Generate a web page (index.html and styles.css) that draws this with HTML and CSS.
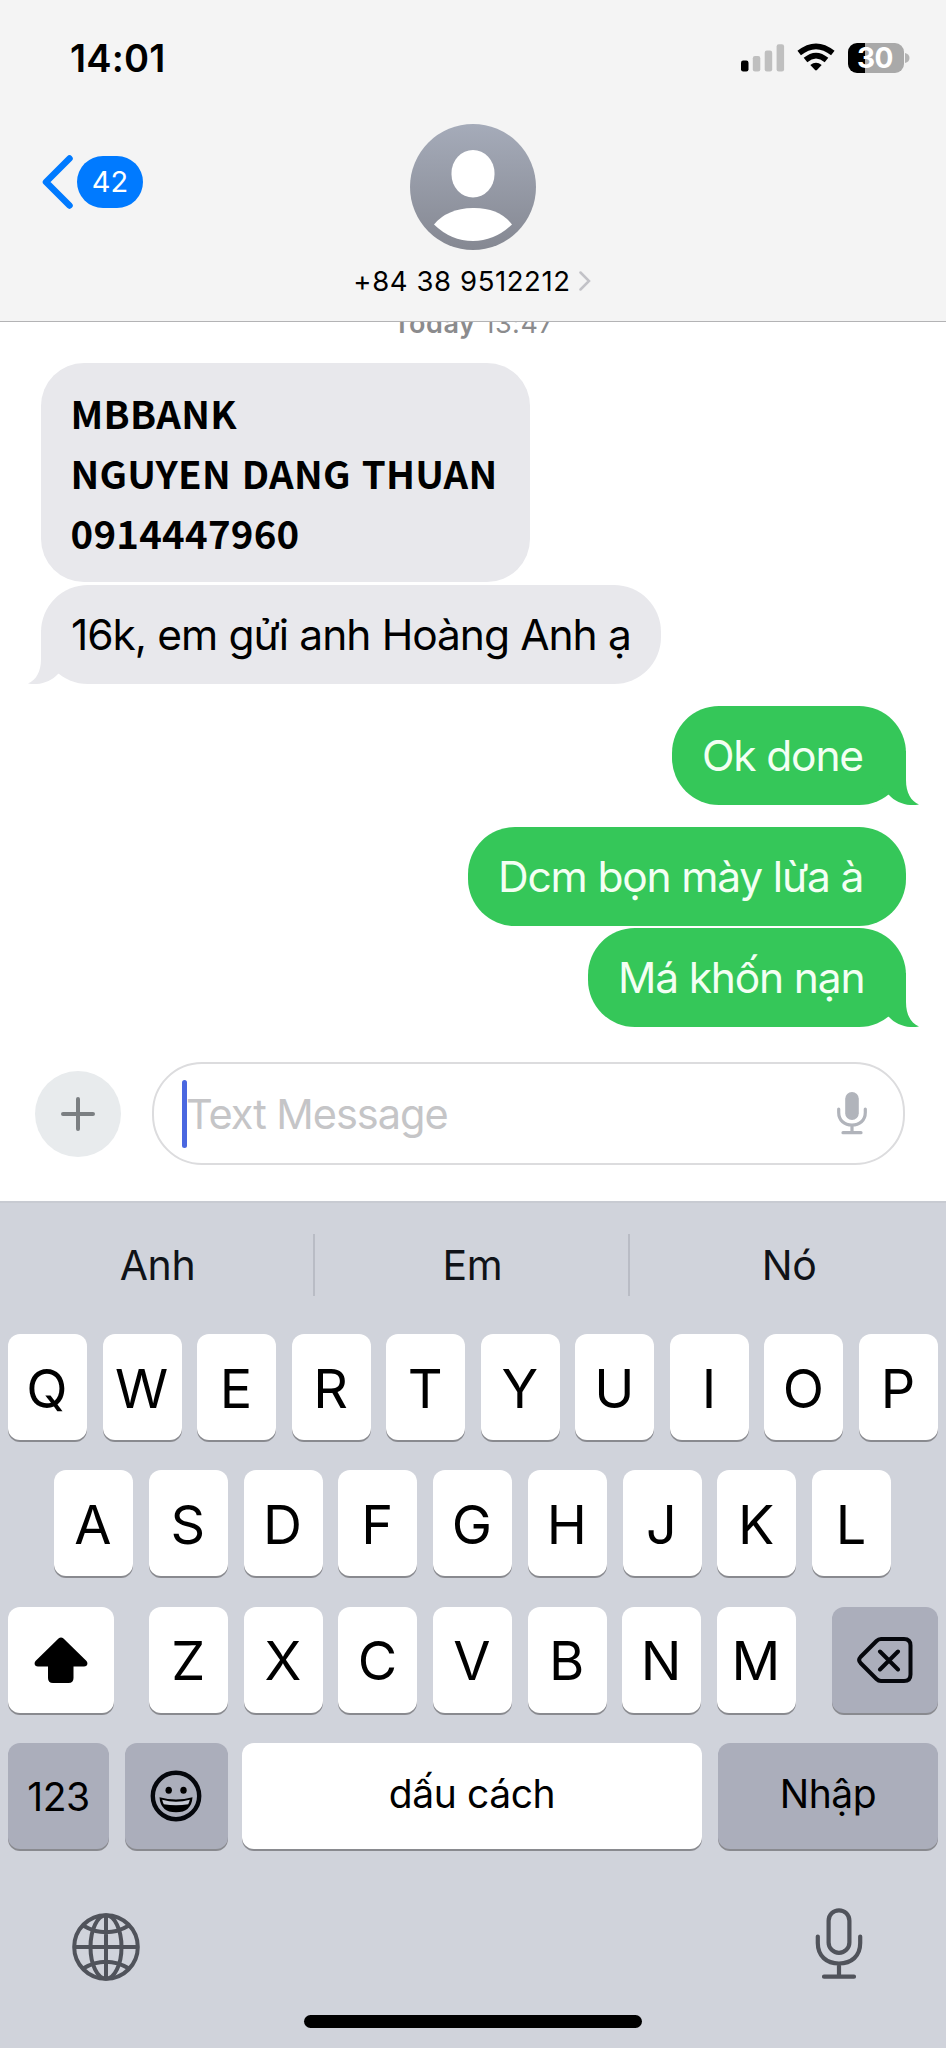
FILE: index.html
```
<!DOCTYPE html>
<html lang="vi">
<head>
<meta charset="utf-8">
<title>Messages</title>
<link rel="stylesheet" href="styles.css">
</head>
<body>
<svg class="defs" width="0" height="0">
  <symbol id="tail" viewBox="0 0 40 54"><path d="M27 0V29C27 42 32 50 40 53.6C29 55.500 17 52 10 44L0 34V0Z"/></symbol>
</svg>
<div class="phone">
  <header class="header">
    <div class="status">
      <span class="time">14:01</span>
      <div class="indicators">
        <svg class="signal" width="44" height="28" viewBox="0 0 44 28">
          <rect x="0" y="16.500" width="7.500" height="11" rx="2.200" fill="#000"/>
          <rect x="11.800" y="12" width="7.500" height="15.500" rx="2.200" fill="#bfbfbf"/>
          <rect x="23.700" y="6.500" width="7.500" height="21" rx="2.200" fill="#bfbfbf"/>
          <rect x="35.600" y="0.300" width="7.500" height="27.200" rx="2.200" fill="#bfbfbf"/>
        </svg>
        <svg class="wifi" width="38" height="29" viewBox="0 0 38 29">
          <path d="M2.200 10Q19 -3.400 35.800 10M8.500 17Q19 8.200 29.500 17" fill="none" stroke="#000" stroke-width="5.600"/>
          <path d="M13.300 22Q19 17.700 24.700 22L20.200 26.800Q19 28.200 17.800 26.800Z"/>
        </svg>
        <div class="battery"><span class="level">30</span></div>
        <svg class="nub" width="5" height="12" viewBox="0 0 5 12"><path d="M0 1Q4.500 2 4.500 6T0 11Z" fill="#b4b4b4"/></svg>
      </div>
    </div>
    <div class="nav">
      <div class="back">
        <svg width="31" height="54" viewBox="0 0 31 54"><path d="M27.500 3.500L4 27L27.500 50.500" fill="none" stroke="#007aff" stroke-width="6.500" stroke-linecap="round" stroke-linejoin="round"/></svg>
        <span class="unread">42</span>
      </div>
      <div class="contact">
        <svg class="avatar" width="126" height="126" viewBox="0 0 126 126">
          <defs><linearGradient id="g" x1="0" y1="0" x2="0" y2="1"><stop offset="0" stop-color="#a5abb9"/><stop offset="1" stop-color="#858892"/></linearGradient></defs>
          <circle cx="63" cy="63" r="63" fill="url(#g)"/>
          <rect x="41.500" y="26" width="43" height="47.500" rx="21.500" ry="23" fill="#fff"/>
          <path d="M24 100.500Q37 84.500 63 84T102 100.500Q85 117 63 117T24 100.500Z" fill="#fff"/>
        </svg>
        <div class="name"><span class="number">+84 38 9512212</span><svg width="12" height="20" viewBox="0 0 12 20"><path d="M1.500 1.500L10 10L1.500 18.500" fill="none" stroke="#c2c2c7" stroke-width="2.500" stroke-linecap="round"/></svg></div>
      </div>
    </div>
  </header>

  <main class="thread">
    <div class="stamp"><b>Today</b> 13:47</div>
    <div class="bubble in bank">MBBANK<br>NGUYEN DANG THUAN<br>0914447960</div>
    <div class="bubble in ask"><span>16k, em gửi anh Hoàng Anh ạ</span><svg class="tail left"><use href="#tail"/></svg></div>
    <div class="bubble out ok"><span>Ok done</span><svg class="tail"><use href="#tail"/></svg></div>
    <div class="bubble out lua"><span>Dcm bọn mày lừa à</span></div>
    <div class="bubble out ma"><span>Má khốn nạn</span><svg class="tail"><use href="#tail"/></svg></div>
  </main>

  <div class="composer">
    <div class="plus"><svg width="34" height="34" viewBox="0 0 34 34"><path d="M17 2V32M2 17H32" stroke="#7b7f82" stroke-width="4" stroke-linecap="round"/></svg></div>
    <div class="field">
      <i class="caret"></i><span class="placeholder">Text Message</span>
      <svg class="dictate" width="30" height="43" viewBox="0 0 30 43"><rect x="8.200" y="0" width="13.600" height="28" rx="6.800" fill="#b1b4bb"/><path d="M1.700 17V20.500C1.700 28.500 7.500 33 15 33S28.300 28.500 28.300 20.500V17M15 33V40.500M6 40.700H24" fill="none" stroke="#b1b4bb" stroke-width="3.200" stroke-linecap="round"/></svg>
    </div>
  </div>

  <section class="keyboard">
    <div class="suggestions"><span>Anh</span><span>Em</span><span>Nó</span></div>
    <div class="keys">
      <div class="row"><b>Q</b><b>W</b><b>E</b><b>R</b><b>T</b><b>Y</b><b>U</b><b>I</b><b>O</b><b>P</b></div>
      <div class="row second"><b>A</b><b>S</b><b>D</b><b>F</b><b>G</b><b>H</b><b>J</b><b>K</b><b>L</b></div>
      <div class="row third">
        <b class="wide"><svg width="54" height="46" viewBox="0 0 54 46"><path d="M24.500 1.600Q27 -0.600 29.500 1.600L52.500 24C54.500 26.500 53 29.500 50 29.500H39.500V41Q39.500 46 34.500 46H19Q14 46 14 41V29.500H4C1 29.500 -0.500 26.500 1.500 24Z"/></svg></b>
        <div class="letters"><b>Z</b><b>X</b><b>C</b><b>V</b><b>B</b><b>N</b><b>M</b></div>
        <b class="wide dark"><svg width="56" height="46" viewBox="0 0 56 46"><path d="M24 2H47Q53.500 2 53.500 8.500V37.500Q53.500 44 47 44H24Q21.500 44 19.500 42L3.500 26Q0.800 23 3.500 20L19.500 4Q21.500 2 24 2ZM23 14.500L41 32.500M41 14.500L23 32.500" fill="none" stroke="#05070c" stroke-width="4" stroke-linecap="round" stroke-linejoin="round"/></svg></b>
      </div>
      <div class="row fourth">
        <b class="dark num">123</b>
        <b class="dark emoji"><svg class="smile" width="52" height="52" viewBox="0 0 52 52"><circle cx="26" cy="26" r="23.200" fill="none" stroke="#05070c" stroke-width="4.400"/><ellipse cx="18.700" cy="20.300" rx="3.200" ry="3.500"/><ellipse cx="33.500" cy="20.300" rx="3.200" ry="3.500"/><path d="M9.500 27.200Q26 31.800 42.500 27.200Q41.500 42.300 26 42.300T9.500 27.200Z"/><path d="M12.200 29.800Q26 33.500 39.800 29.800Q39.300 32.300 38.200 34.200Q26 36.500 13.800 34.200Q12.700 32.300 12.200 29.800Z" fill="#c6c9d3"/></svg></b>
        <b class="space">dấu cách</b>
        <b class="dark enter">Nhập</b>
      </div>
    </div>
    <div class="dock">
      <svg class="globe" width="68" height="68" viewBox="0 0 68 68" fill="none" stroke="#50535b" stroke-width="4"><circle cx="34" cy="34" r="31.800"/><path d="M34 2V66M2 34H66M11 12.500Q34 26 57 12.500M11 55.500Q34 42 57 55.500"/><ellipse cx="34" cy="34" rx="15.500" ry="31.800"/></svg>
      <svg width="48" height="72" viewBox="0 0 48 72" fill="none" stroke="#50535b" stroke-width="4.200" stroke-linecap="round"><rect x="13.600" y="2.300" width="20.800" height="42.500" rx="10.400"/><path d="M2.800 28.500V35C2.800 48 11.500 55.500 24 55.500S45.200 48 45.200 35V28.500M24 55.500V68.500M9 68.700H39"/></svg>
    </div>
    <div class="home"></div>
  </section>
</div>
</body>
</html>
```
FILE: styles.css
```
* { box-sizing: border-box; }
body { margin: 0; background: #fff; font-family: Inter, "Noto Sans", sans-serif; color: #000; }
svg { display: block; flex: none; }
.defs { position: absolute; }
.phone { width: 946px; height: 2048px; display: flex; flex-direction: column; overflow: hidden; }

.header { height: 322px; flex: none; background: #f4f4f4; border-bottom: 1px solid #b3b3b5; }
.status { height: 124px; padding: 43px 36px 0 70px; display: flex; justify-content: space-between; align-items: flex-start; }
.time { font-size: 38px; line-height: 31px; font-weight: 600; letter-spacing: 0.2px; }
.indicators { display: flex; }
.signal { margin: 1px 12px 0 0; }
.wifi { margin-right: 13px; }
.battery { width: 56px; height: 30px; border-radius: 9px; background: linear-gradient(90deg, #000 17px, #a9a9a9 17px); display: flex; align-items: center; justify-content: center; padding-right: 2px; }
.level { font-size: 28px; line-height: 30px; font-weight: 700; color: #fff; letter-spacing: -0.5px; }
.nub { margin: 9px 0 0 1px; }
.nav { display: grid; grid-template-columns: 1fr 260px 1fr; }
.back { display: flex; align-items: center; gap: 4px; height: 54px; margin: 31px 0 0 42px; }
.unread { width: 66px; height: 52px; border-radius: 26px; background: #007aff; color: #fff; font-size: 29px; line-height: 52px; text-align: center; }
.contact { display: flex; flex-direction: column; align-items: center; }
.name { display: flex; align-items: center; gap: 8px; height: 36px; margin-top: 13px; margin-left: -2px; }
.number { font-size: 27.500px; letter-spacing: 0.6px; white-space: nowrap; }

.thread { height: 705px; flex: none; display: flex; flex-direction: column; align-items: flex-start; padding: 0 40px 0 41px; overflow: hidden; }
.stamp { align-self: center; height: 41px; font-size: 27px; line-height: 32px; letter-spacing: 0.5px; margin-top: -14px; margin-bottom: 14px; color: #8b8b8d; white-space: nowrap; }
.stamp b { font-weight: 600; }
.bubble { position: relative; flex: none; height: 99px; border-radius: 47px; font-size: 42.500px; line-height: 99px; letter-spacing: -1.180px; white-space: nowrap; padding-left: 30px; }
.in { background: #e8e8ec; }
.out { background: #35c759; color: #f3fff3; align-self: flex-end; }
.bank { width: 489px; height: 219px; padding: 18.500px 0 0 29.500px; border-radius: 43px; font: 700 38.400px/60px "Noto Sans CJK SC", "Noto Sans", sans-serif; letter-spacing: 0.25px; word-spacing: 2px; }
.ask { width: 620px; margin-top: 3px; letter-spacing: -1.050px; word-spacing: 0.4px; }
.ok { width: 234px; margin-top: 22px; }
.lua { width: 438px; margin-top: 22px; }
.ma { width: 318px; margin-top: 2px; }
.tail { position: absolute; right: -13px; bottom: 0; width: 40px; height: 54px; fill: #35c759; }
.tail.left { right: auto; left: -13px; transform: scaleX(-1); fill: #e8e8ec; }

.composer { height: 174px; flex: none; display: flex; align-items: flex-start; padding: 35px 41px 0 35px; }
.plus { width: 86px; height: 86px; margin: 9px 31px 0 0; border-radius: 50%; background: #e8ebed; display: flex; align-items: center; justify-content: center; }
.field { flex: 1; height: 103px; border: 2px solid #dcdcde; border-radius: 50px; display: flex; align-items: center; padding: 0 36px 0 28px; }
.caret { width: 5px; height: 68px; border-radius: 3px; background: #4a67e0; }
.placeholder { flex: 1; margin-left: -1px; font-size: 41.500px; line-height: 98px; letter-spacing: -1.030px; color: #c5c5c7; white-space: nowrap; }

.keyboard { height: 847px; flex: none; background: #d0d3db; border-top: 2px solid #c8cbd2; display: flex; flex-direction: column; }
.suggestions { height: 62px; margin-top: 31px; display: grid; grid-template-columns: 313px 315px 1fr; font-size: 41px; line-height: 62px; letter-spacing: -0.4px; color: #101318; text-align: center; }
.suggestions span { padding-left: 2px; }
.suggestions span + span { border-left: 2px solid #b9bcc5; }
.keys { margin-top: 38px; display: flex; flex-direction: column; gap: 30.400px; padding: 0 8px; }
.row, .letters { display: flex; justify-content: center; gap: 15.600px; }
.row b { width: 79px; height: 106px; border-radius: 12px; background: #fff; box-shadow: 0 2px 0 #898a8f; display: flex; align-items: center; justify-content: center; font-weight: 400; font-size: 54px; line-height: 1; padding: 3px 1px 0 0; }
.row .dark { background: #abaebb; }
.row.second { padding-right: 1px; gap: 15.750px; }
.row.third { justify-content: space-between; }
.letters { padding-right: 1px; }
.third .wide { width: 106px; padding: 0; }
.third .wide:first-child { padding-right: 1px; }
.row.fourth { gap: 0; justify-content: flex-start; }
.row.fourth b { font-size: 39px; letter-spacing: -0.4px; padding: 0; }
.row.fourth .num { width: 101px; }
.row.fourth .emoji { width: 103px; margin: 0 14px 0 16px; padding-right: 1px; }
.row.fourth .space { width: 460px; padding-bottom: 6px; }
.row.fourth .enter { width: 220px; margin-left: 16px; padding-bottom: 6px; }
.dock { display: flex; justify-content: space-between; align-items: center; height: 72px; margin-top: 59px; padding: 0 83px 0 72px; }
.globe { margin-top: 5px; }
.home { width: 338px; height: 13px; border-radius: 7px; background: #000; margin: 35px auto 0; }
```
